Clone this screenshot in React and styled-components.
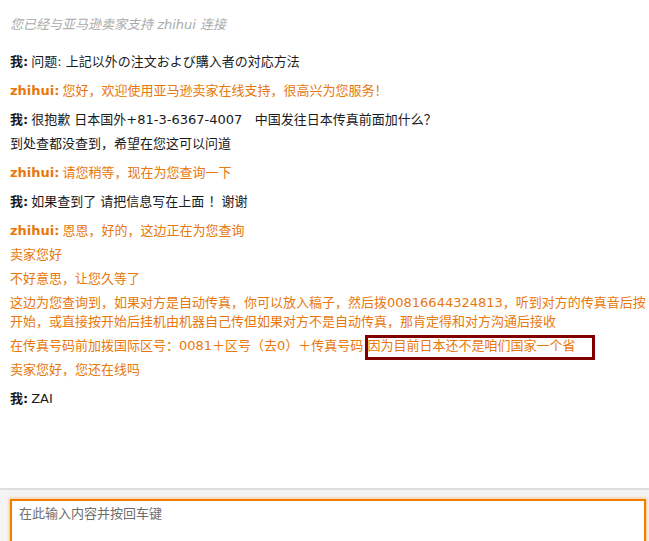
import React from 'react';
import styled, { createGlobalStyle } from 'styled-components';

const GlobalStyle = createGlobalStyle`
  html, body {
    margin: 0;
    padding: 0;
    background: #fff;
  }
  body {
    font-family: "DejaVu Sans", "Noto Sans CJK SC", sans-serif;
    font-size: 13px;
  }
`;

const ORANGE = '#e8780c';

const Page = styled.div`
  height: 100vh;
  display: flex;
  flex-direction: column;
  overflow: hidden;
`;

const Log = styled.div`
  flex: 1;
  padding: 15px 2px 0 10px;
`;

const SystemLine = styled.div`
  color: #aaa;
  font-style: italic;
  line-height: 19px;
  margin-bottom: 18px;
`;

const Message = styled.div`
  margin-bottom: 10px;
  color: ${p => (p.$agent ? ORANGE : '#1a1a1a')};
`;

const Para = styled.p`
  margin: 0 0 5px;
  line-height: 19px;
  &:last-child {
    margin-bottom: 0;
  }
`;

const Who = styled.b`
  font-weight: bold;
  margin-right: 3px;
`;

const Marked = styled.span`
  position: relative;
  display: inline-block;
  line-height: 19px;
  &::after {
    content: '';
    position: absolute;
    left: -3px;
    top: -1px;
    width: 224px;
    height: 19px;
    border: 3px solid #800000;
  }
`;

const InputBar = styled.div`
  border-top: 2px solid #dedede;
  background: #f4f4f4;
  padding: 9px 3px 0 10px;
  height: 53px;
  box-sizing: border-box;
`;

const Box = styled.textarea`
  display: block;
  width: 100%;
  height: 70px;
  box-sizing: border-box;
  border: 2px solid #f07d00;
  border-bottom: none;
  box-shadow: 0 0 3px 1px #f9c48f;
  background: #fff;
  padding: 5px 7px;
  font-family: "DejaVu Sans", "Noto Sans CJK SC", sans-serif;
  font-size: 13px;
  line-height: 16px;
  resize: none;
  outline: none;
  &::placeholder {
    color: #6e6e6e;
  }
`;

const Line = ({ agent, children }) => (
  <Para>
    <Who>{agent ? 'zhihui:' : '我:'}</Who>
    {children}
  </Para>
);

export default function App() {
  return (
    <Page>
      <GlobalStyle />
      <Log>
        <SystemLine>您已经与亚马逊卖家支持 zhihui 连接</SystemLine>

        <Message>
          <Line>问题: 上記以外の注文および購入者の対応方法</Line>
        </Message>

        <Message $agent>
          <Line agent>您好，欢迎使用亚马逊卖家在线支持，很高兴为您服务！</Line>
        </Message>

        <Message>
          <Line>很抱歉 日本国外+81-3-6367-4007&nbsp;&nbsp;&nbsp;中国发往日本传真前面加什么？</Line>
          <Para>到处查都没查到，希望在您这可以问道</Para>
        </Message>

        <Message $agent>
          <Line agent>请您稍等，现在为您查询一下</Line>
        </Message>

        <Message>
          <Line>如果查到了 请把信息写在上面 ！谢谢</Line>
        </Message>

        <Message $agent>
          <Line agent>恩恩，好的，这边正在为您查询</Line>
          <Para>卖家您好</Para>
          <Para>不好意思，让您久等了</Para>
          <Para>
            这边为您查询到，如果对方是自动传真，你可以放入稿子，然后拨00816644324813，听到对方的传真音后按开始，或直接按开始后挂机由机器自己传但如果对方不是自动传真，那肯定得和对方沟通后接收
          </Para>
          <Para>
            在传真号码前加拨国际区号：0081＋区号（去0）＋传真号码 <Marked>因为目前日本还不是咱们国家一个省</Marked>
          </Para>
          <Para>卖家您好，您还在线吗</Para>
        </Message>

        <Message>
          <Line>ZAI</Line>
        </Message>
      </Log>
      <InputBar>
        <Box placeholder="在此输入内容并按回车键" />
      </InputBar>
    </Page>
  );
}
